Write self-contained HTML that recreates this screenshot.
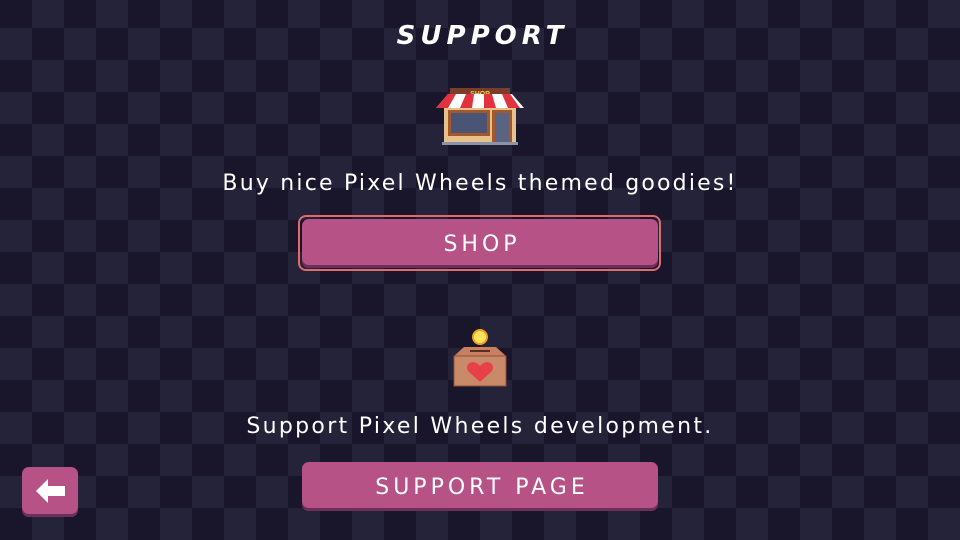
<!DOCTYPE html>
<html><head><meta charset="utf-8"><style>
body{margin:0;width:960px;height:540px;overflow:hidden;font-family:"DejaVu Sans","Liberation Sans",sans-serif;color:#fff;
background-color:#19152a;
background-image:conic-gradient(#25233a 0 25%,#19152a 0 50%,#25233a 0 75%,#19152a 0);
background-size:64px 64px;background-position:0 -4px;position:relative}
.t{position:absolute;left:0;width:960px;text-align:center}
.btn{position:absolute;background:#b65286;border-radius:7px;box-shadow:inset 0 -3px 0 #6c2f5a;text-align:center;color:#fff;font-size:22px;letter-spacing:4px}
</style></head><body>
<div class="t" style="top:21px;font-size:26px;font-weight:bold;font-style:italic;letter-spacing:5px;text-indent:5px">SUPPORT</div>
<svg style="position:absolute;left:434px;top:86px" width="92" height="60" viewBox="0 0 92 60">
<rect x="16" y="2" width="60" height="10" fill="#7a3e2a"/>
<text x="46" y="10" font-size="7" font-weight="bold" fill="#f7c948" text-anchor="middle" font-family="Liberation Sans">SHOP</text>
<rect x="10" y="14" width="72" height="44" fill="#e8c08a"/>
<path d="M2 22 L14 8 L78 8 L90 22 Z" fill="#fff"/>
<path d="M2 22 L14 8 L22 8 L14 22Z M26 22 L32 8 L40 8 L38 22Z M50 22 L50 8 L58 8 L62 22Z M74 22 L68 8 L76 8 L86 22Z" fill="#e2323e"/>
<rect x="14" y="24" width="42" height="26" fill="#a1582c"/><rect x="17" y="27" width="36" height="20" fill="#4a5474"/>
<rect x="58" y="24" width="20" height="32" fill="#a1582c"/><rect x="61" y="27" width="14" height="29" fill="#5a6482"/>
<rect x="8" y="56" width="76" height="3" fill="#8a93a8"/>
</svg>
<div class="t" style="top:171px;font-size:22px;letter-spacing:2.2px">Buy nice Pixel Wheels themed goodies!</div>
<div style="position:absolute;left:298px;top:215px;width:359px;height:52px;border:2px solid #e36a6a;border-radius:8px"></div>
<div class="btn" style="left:302px;top:219px;width:356px;height:49px;line-height:51px;text-indent:4px">SHOP</div>
<svg style="position:absolute;left:452px;top:326px" width="56" height="62" viewBox="0 0 56 62">
<circle cx="28" cy="11" r="8" fill="#f0a020"/><circle cx="28" cy="11" r="6" fill="#fde25a"/>
<path d="M2 30 L12 21 L44 21 L54 30 Z" fill="#c88060"/>
<rect x="2" y="30" width="52" height="30" fill="#c98a6a" stroke="#8e4f35" stroke-width="1"/>
<rect x="18" y="24" width="20" height="2" fill="#5a3020"/>
<path d="M28 56 L16 45 Q13 38 20 36 Q25 36 28 40 Q31 36 36 36 Q43 38 40 45 Z" fill="#e84048"/>
</svg>
<div class="t" style="top:414px;font-size:22px;letter-spacing:2.3px">Support Pixel Wheels development.</div>
<div class="btn" style="left:302px;top:462px;width:356px;height:49px;line-height:51px;text-indent:4px">SUPPORT PAGE</div>
<div class="btn" style="left:22px;top:467px;width:56px;height:50px">
<svg style="position:absolute;left:14px;top:12px" width="30" height="24" viewBox="0 0 30 24"><path d="M0 12 L12 0 L12 7 L29 7 L29 17 L12 17 L12 24 Z" fill="#fff"/></svg>
</div>
</body></html>
